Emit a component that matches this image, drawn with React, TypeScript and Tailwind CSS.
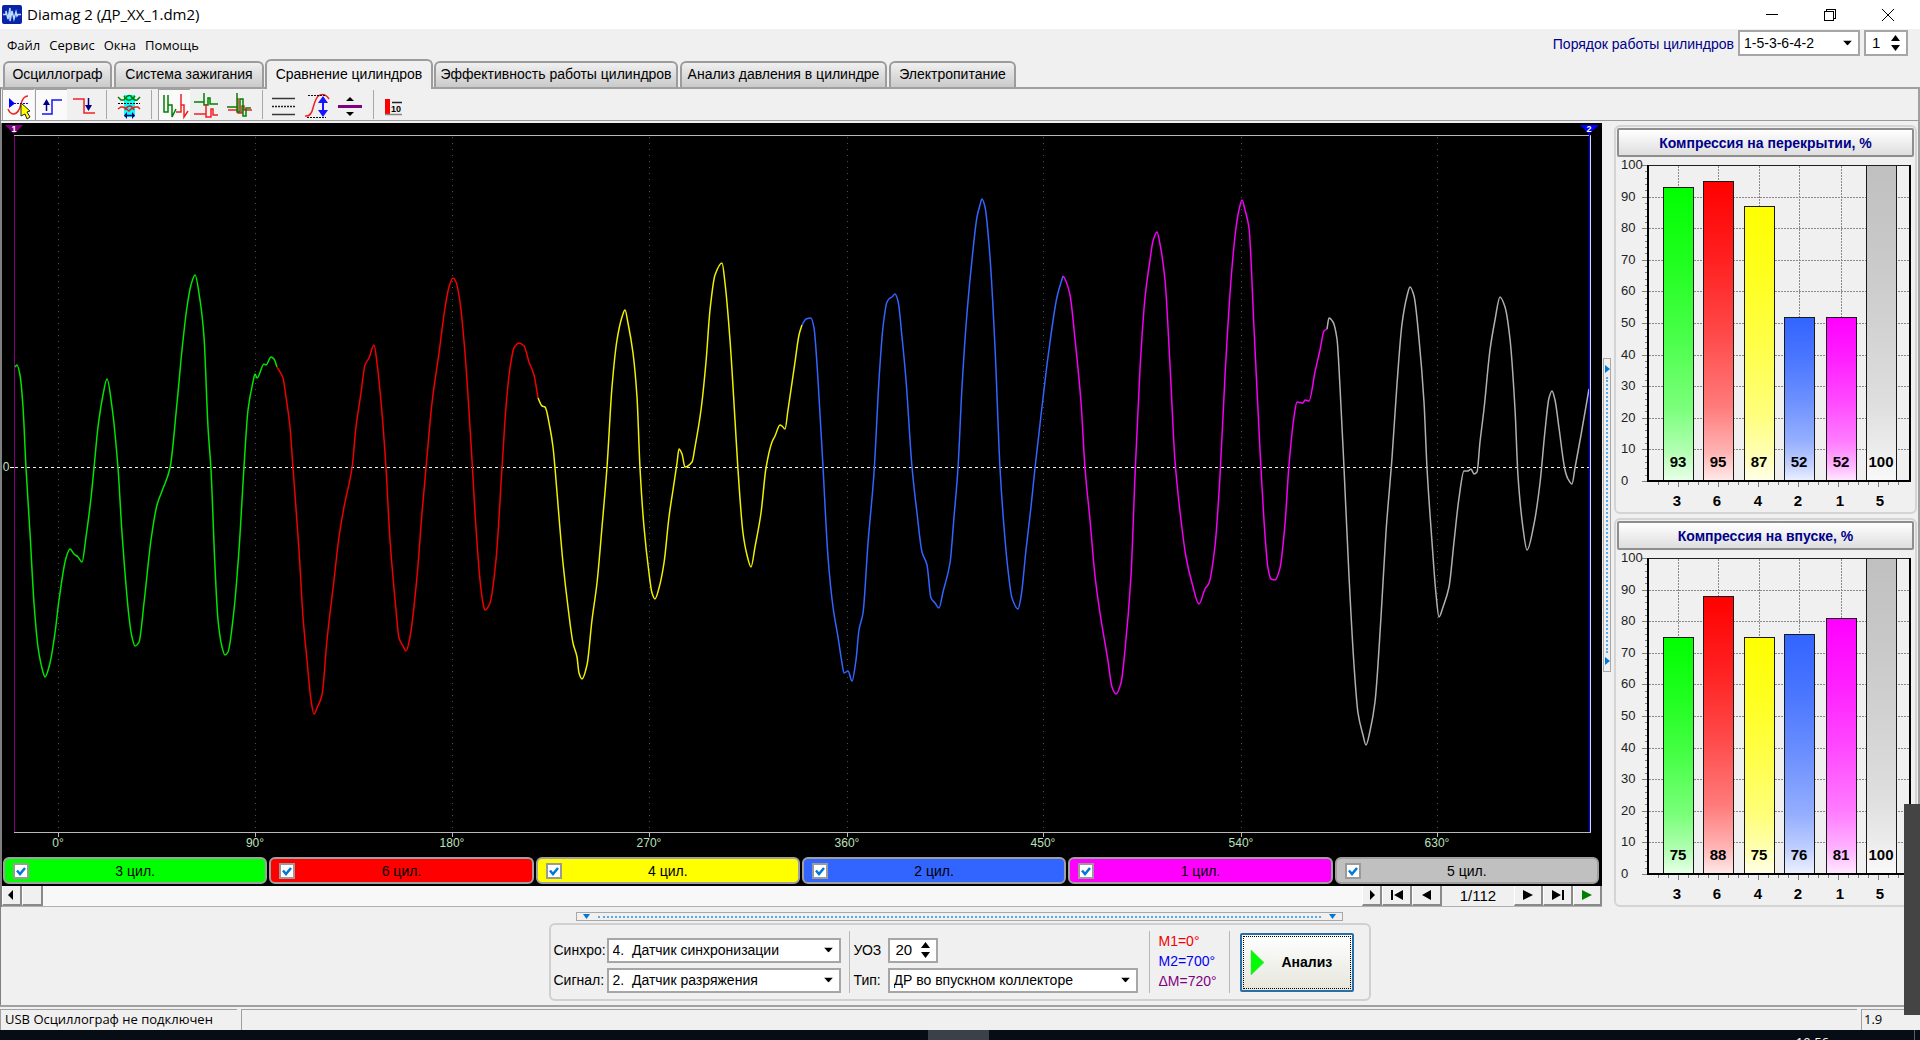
import type { ReactNode } from "react";

type Point = [number, number];

type Cylinder = {
  id: number;
  fill: string;
  button: string;
  line: string;
  overlap: number;
  intake: number;
  trace: Point[];
};

const CYLINDERS: Cylinder[] = [
  {
    id: 3, fill: "#00ff00", button: "bg-[#00ff00]", line: "#00e400", overlap: 93, intake: 75,
    trace: [[15,367],[17,365],[20,375],[23,407],[26,468],[30,533],[34,603],[38,647],[43,672],[45,677],[50,663],[55,633],[59,600],[66,558],[70,549],[74,554],[78,557],[82,562],[86,537],[91,498],[94,468],[98,427],[103,395],[107,379],[112,407],[118,468],[122,533],[129,617],[132,637],[135,646],[139,642],[144,603],[151,540],[157,505],[162,491],[170,468],[177,403],[182,350],[187,307],[191,285],[195,275],[200,300],[204,337],[208,427],[211,470],[215,567],[218,620],[222,647],[225,655],[228,652],[234,610],[239,550],[244,467],[248,410],[253,382],[255,374],[257,378],[264,364],[266,365],[271,357],[274,359],[277,367]],
  },
  {
    id: 6, fill: "#ff0000", button: "bg-[#ff0000]", line: "#f00000", overlap: 95, intake: 88,
    trace: [[277,367],[283,378],[286,397],[290,427],[293,468],[299,550],[303,617],[307,660],[311,700],[314,714],[317,708],[322,695],[327,640],[334,580],[339,537],[344,507],[352,468],[356,427],[361,393],[365,365],[369,358],[374,345],[377,363],[382,413],[386,468],[390,540],[396,610],[399,638],[403,646],[406,651],[410,637],[417,577],[422,513],[426,468],[432,403],[439,353],[445,308],[449,287],[453,278],[456,282],[460,302],[465,353],[472,460],[475,513],[480,580],[483,603],[485,610],[490,603],[496,560],[502,468],[506,407],[510,368],[514,348],[519,343],[524,346],[529,362],[534,375],[538,398]],
  },
  {
    id: 4, fill: "#ffff00", button: "bg-[#ffff00]", line: "#f0f000", overlap: 87, intake: 75,
    trace: [[538,398],[542,406],[545,407],[550,428],[553,447],[555,468],[559,517],[563,563],[568,607],[573,643],[577,657],[579,673],[582,679],[587,665],[592,620],[597,583],[602,527],[607,467],[612,387],[617,340],[622,317],[625,310],[628,323],[633,353],[637,397],[640,468],[644,527],[649,573],[652,593],[655,599],[659,588],[664,563],[669,517],[673,490],[677,463],[679,449],[682,454],[685,467],[692,462],[695,447],[701,410],[706,362],[710,310],[715,275],[722,263],[725,283],[730,340],[735,420],[738,470],[743,533],[747,555],[751,567],[755,547],[761,513],[766,468],[772,442],[775,436],[780,425],[782,426],[785,429],[788,410],[795,362],[799,335],[802,325]],
  },
  {
    id: 2, fill: "#3264ff", button: "bg-[#3264ff]", line: "#3264ff", overlap: 52, intake: 76,
    trace: [[802,325],[806,319],[811,318],[814,328],[818,380],[823,467],[828,557],[833,607],[838,637],[842,663],[844,673],[848,671],[852,681],[856,660],[859,630],[863,613],[868,543],[874,473],[879,380],[883,327],[887,302],[890,298],[892,297],[895,294],[898,301],[902,337],[906,380],[912,467],[917,513],[922,552],[927,565],[931,598],[935,603],[939,608],[943,592],[950,563],[954,517],[958,468],[962,387],[967,313],[973,250],[977,217],[980,205],[982,199],[985,207],[990,257],[995,347],[1000,468],[1004,527],[1008,570],[1012,598],[1018,609],[1021,597],[1026,550],[1031,507],[1035,468],[1042,407],[1048,357],[1057,297],[1063,276]],
  },
  {
    id: 1, fill: "#ff00ff", button: "bg-[#ff00ff]", line: "#f400f4", overlap: 52, intake: 81,
    trace: [[1063,276],[1065,279],[1070,295],[1075,339],[1081,402],[1085,468],[1090,520],[1095,576],[1100,613],[1108,661],[1112,687],[1116,694],[1121,683],[1125,650],[1131,576],[1135,476],[1140,369],[1145,298],[1150,260],[1153,241],[1157,232],[1160,244],[1165,280],[1170,365],[1175,461],[1181,520],[1186,557],[1192,583],[1199,604],[1205,589],[1209,583],[1215,546],[1220,476],[1225,376],[1231,280],[1236,228],[1239,210],[1242,200],[1245,210],[1249,228],[1254,328],[1260,450],[1265,535],[1268,568],[1271,579],[1275,580],[1280,568],[1285,524],[1289,465],[1294,417],[1297,402],[1303,403],[1305,400],[1309,401],[1315,372],[1320,350],[1324,331],[1327,329]],
  },
  {
    id: 5, fill: "#c0c0c0", button: "bg-[#c0c0c0]", line: "#b0b0b0", overlap: 100, intake: 100,
    trace: [[1327,329],[1329,318],[1333,322],[1337,339],[1340,387],[1344,468],[1349,576],[1354,665],[1358,713],[1363,735],[1366,745],[1370,731],[1375,702],[1381,617],[1386,532],[1392,458],[1397,384],[1402,324],[1407,296],[1410,287],[1414,296],[1419,339],[1424,402],[1427,468],[1432,542],[1436,594],[1439,617],[1443,607],[1449,587],[1454,542],[1459,498],[1464,471],[1468,471],[1471,469],[1474,474],[1477,472],[1480,442],[1484,409],[1490,350],[1495,320],[1500,297],[1505,307],[1510,339],[1515,409],[1518,476],[1523,528],[1527,550],[1534,524],[1540,483],[1545,431],[1549,398],[1552,391],[1555,400],[1559,428],[1565,470],[1568,479],[1572,484],[1575,468],[1581,435],[1589,389]],
  },
];

/** Monotone cubic path through the samples, so that peaks never overshoot. */
function tracePath(points: Point[]): string {
  const n = points.length;
  const slope = (i: number) => (points[i + 1][1] - points[i][1]) / (points[i + 1][0] - points[i][0]);
  const tangents = points.map((_, i) => {
    if (i === 0) return slope(0);
    if (i === n - 1) return slope(n - 2);
    const a = slope(i - 1);
    const b = slope(i);
    return a * b <= 0 ? 0 : (2 * a * b) / (a + b);
  });
  let d = `M${points[0][0]} ${points[0][1]}`;
  for (let i = 0; i < n - 1; i++) {
    const [x0, y0] = points[i];
    const [x1, y1] = points[i + 1];
    const h = (x1 - x0) / 3;
    d += `C${x0 + h} ${y0 + tangents[i] * h} ${x1 - h} ${y1 - tangents[i + 1] * h} ${x1} ${y1}`;
  }
  return d;
}

const GRID: { x: number; label: string }[] = [
  { x: 58, label: "0°" },
  { x: 255, label: "90°" },
  { x: 452, label: "180°" },
  { x: 649, label: "270°" },
  { x: 847, label: "360°" },
  { x: 1043, label: "450°" },
  { x: 1241, label: "540°" },
  { x: 1437, label: "630°" },
];

function Oscillogram() {
  return (
    <svg
      className="block min-h-0 w-full flex-1"
      viewBox="2 123 1600 734"
      preserveAspectRatio="none"
      role="img"
      aria-label="Осциллограмма цилиндров"
    >
      <g shapeRendering="crispEdges">
        <path d="M14 135.5H1591M14 832.5H1591" stroke="#b8b8b8" />
        {GRID.map((g) => (
          <g key={g.x}>
            <path d={`M${g.x + 0.5} 137V832`} stroke="#505050" strokeDasharray="1 5" />
            <path d={`M${g.x + 0.5} 833V837`} stroke="#b8b8b8" />
          </g>
        ))}
        <path d="M10 467.5H14" stroke="#fff" />
        <path d="M15 467.5H1589" stroke="#f0f0f0" strokeDasharray="3 3" />
        <path d="M14.5 136V832" stroke="#800080" />
      </g>
      <g fill="none" strokeWidth="1.5">
        {CYLINDERS.map((c) => (
          <path key={c.id} d={tracePath(c.trace)} stroke={c.line} />
        ))}
      </g>
      <path d="M1589.5 133V832" stroke="#0000ff" strokeWidth="1" shapeRendering="crispEdges" />
      <path d="M1590.5 136V832" stroke="#d8d8ff" strokeWidth="1" shapeRendering="crispEdges" />
      <path d="M5 125H23L14 134Z" fill="#800080" />
      <path d="M1580 125H1599L1589 134Z" fill="#0000ff" />
      <g className="font-['Liberation_Sans'] text-[9px] font-bold" fill="#fff" textAnchor="middle">
        <text x="14" y="132">1</text>
        <text x="1589" y="132">2</text>
      </g>
      <g className="font-['Liberation_Sans'] text-[12px]" fill="#bfe0bf" textAnchor="middle">
        <text x="6" y="471">0</text>
        {GRID.map((g) => (
          <text key={g.x} x={g.x} y="847">{g.label}</text>
        ))}
      </g>
    </svg>
  );
}

const BAR_CENTERS = [63, 103, 144, 184, 226, 266];
const AXIS_TOP = 8;
const AXIS_BOTTOM = 324;
const perUnit = (AXIS_BOTTOM - AXIS_TOP) / 100;
const valueY = (v: number) => Math.round(AXIS_BOTTOM - v * perUnit);

function CompressionChart({ title, name, field }: { title: string; name: string; field: "overlap" | "intake" }) {
  const tens = Array.from({ length: 11 }, (_, i) => i * 10);
  return (
    <section className="flex min-h-0 flex-1 flex-col rounded-md border-2 border-[#d4d4d4] p-px">
      <button
        type="button"
        className="h-[29px] shrink-0 rounded-xs border-2 border-[#8e8e8e] bg-linear-to-b from-white to-[#dedede] text-[14px] leading-5 font-bold text-[#000088]"
      >
        {title}
      </button>
      <svg className="block min-h-0 w-full flex-1" viewBox="2 0 297 354" preserveAspectRatio="none" role="img" aria-label={title}>
        <defs>
          {CYLINDERS.map((c) => (
            <linearGradient key={c.id} id={`${name}-${c.id}`} x1="0" y1="0" x2="0" y2="1">
              <stop offset="0" stopColor={c.fill} />
              <stop offset="0.25" stopColor={c.fill} stopOpacity="0.88" />
              <stop offset="0.5" stopColor={c.fill} stopOpacity="0.72" />
              <stop offset="0.75" stopColor={c.fill} stopOpacity="0.52" />
              <stop offset="0.9" stopColor={c.fill} stopOpacity="0.3" />
              <stop offset="1" stopColor={c.fill} stopOpacity="0.08" />
            </linearGradient>
          ))}
        </defs>
        <g shapeRendering="crispEdges">
          {tens.slice(1, 10).map((v) => (
            <path key={v} d={`M34 ${valueY(v) + 0.5}H294`} stroke="#8a8a8a" strokeDasharray="2 1" />
          ))}
          {BAR_CENTERS.map((x) => (
            <path key={x} d={`M${x + 0.5} 9V323`} stroke="#8a8a8a" strokeDasharray="2 1" />
          ))}
          {Array.from({ length: 51 }, (_, i) => (
            <path key={i} d={`M${i % 5 ? 30 : 27} ${valueY(i * 2) + 0.5}H33`} stroke="#808080" />
          ))}
          {Array.from({ length: 25 }, (_, i) => (
            <path key={i} d={`M${43 + i * 10 + 0.5} 325V${i % 4 === 2 ? 330 : 328}`} stroke="#808080" />
          ))}
          {CYLINDERS.map((c, i) => {
            const y = valueY(c[field]);
            return (
              <g key={c.id}>
                <rect x={BAR_CENTERS[i] - 15} y={y} width="31" height={AXIS_BOTTOM - y} fill="#fff" />
                <rect
                  x={BAR_CENTERS[i] - 15 + 0.5}
                  y={y + 0.5}
                  width="30"
                  height={AXIS_BOTTOM - y}
                  fill={`url(#${name}-${c.id})`}
                  stroke="#1a1a1a"
                />
              </g>
            );
          })}
          <path d="M32 8.5H295" stroke="#202020" />
          <path d="M33 8V325M295 8V325M32 324H296" stroke="#000" strokeWidth="2" />
        </g>
        <g className="font-['Liberation_Sans'] text-[13px]" fill="#222">
          {tens.map((v) => (
            <text key={v} x="6" y={valueY(v) + 4}>{v}</text>
          ))}
        </g>
        <g className="font-['Liberation_Sans'] text-[15px] font-bold" fill="#000" textAnchor="middle">
          {CYLINDERS.map((c, i) => (
            <g key={c.id}>
              <text x={BAR_CENTERS[i]} y="310">{c[field]}</text>
              <text x={BAR_CENTERS[i] - 1} y="349">{c.id}</text>
            </g>
          ))}
        </g>
      </svg>
    </section>
  );
}

function Select({ id, value, className }: { id: string; value: string; className: string }) {
  return (
    <span className={`relative block ${className}`}>
      <select
        id={id}
        defaultValue={value}
        className="h-full w-full appearance-none border-2 border-[#a6a6a6] bg-white pl-1 text-[14px] leading-5 whitespace-pre text-black"
      >
        <option value={value}>{value}</option>
      </select>
      <svg className="pointer-events-none absolute top-1/2 right-2 h-[5px] w-[9px] -translate-y-1/2" viewBox="0 0 9 5">
        <path d="M0 0H9L4.5 5Z" fill="#000" />
      </svg>
    </span>
  );
}

function Spinner({ id, value, className }: { id: string; value: string; className: string }) {
  return (
    <span className={`flex items-center border-2 border-[#a6a6a6] bg-white ${className}`}>
      <input id={id} defaultValue={value} className="min-w-0 flex-1 bg-white pl-1.5 text-[15px] leading-5 text-black outline-none" />
      <span className="flex flex-col gap-1 pr-[6px]">
        <button type="button" aria-label="Больше">
          <svg className="block h-[6px] w-[9px]" viewBox="0 0 9 6"><path d="M0 6H9L4.5 0Z" /></svg>
        </button>
        <button type="button" aria-label="Меньше">
          <svg className="block h-[6px] w-[9px]" viewBox="0 0 9 6"><path d="M0 0H9L4.5 6Z" /></svg>
        </button>
      </span>
    </span>
  );
}

function ToolButton({ label, pressed = false, children }: { label: string; pressed?: boolean; children: ReactNode }) {
  return (
    <button
      type="button"
      aria-label={label}
      aria-pressed={pressed}
      className={
        pressed
          ? "h-[31px] w-8 border-t border-l border-t-[#a0a0a0] border-l-[#a0a0a0] bg-[#fafafa]"
          : "h-[31px] w-8"
      }
    >
      <svg className="block h-[30px] w-8" viewBox="0 0 32 30" fill="none" strokeWidth="1.5">
        {children}
      </svg>
    </button>
  );
}

function Separator() {
  return <span className="mx-[5px] h-[29px] w-px bg-[#a8a8a8]" />;
}

function Toolbar() {
  return (
    <div className="flex h-[31px] shrink-0 items-center gap-px pl-px" role="toolbar">
      <ToolButton label="Синхронизация" pressed>
        <path d="M5 19Q7 24 11 24Q16 23 18 14Q20 6 25 6" stroke="#f02020" />
        <path d="M11 13.5H26" stroke="#00f" strokeWidth="1" strokeDasharray="2 1" />
        <path d="M6 8V18L12 13.5Z" fill="#00f" />
        <path d="M18 13L27 21L24 22L27 27L24 29L22 24L18 26Z" fill="#ff0" stroke="#222" strokeWidth="1" />
      </ToolButton>
      <ToolButton label="По переднему фронту" pressed>
        <path d="M6 24H16V10H26" stroke="#1515ff" />
        <path d="M10.5 21V12" stroke="#000080" />
        <path d="M7 15L10.5 9L14 15Z" fill="#000080" />
      </ToolButton>
      <ToolButton label="По заднему фронту">
        <path d="M5 9H16V23H27" stroke="#f02020" />
        <path d="M20.5 8V17" stroke="#000080" />
        <path d="M17 15L20.5 21L24 15Z" fill="#000080" />
      </ToolButton>
      <Separator />
      <ToolButton label="Ширина импульса">
        <path d="M11 5H22V27H11Z" fill="#00ffff" />
        <path d="M5 7L8 10H11Q15 4 18 6Q21 11 24 10L27 7" stroke="#008000" />
        <path d="M11 6Q14 11 17 10Q20 9 22 6" stroke="#008000" />
        <path d="M5 13.5H27" stroke="#000" strokeWidth="1" strokeDasharray="2 1" />
        <path d="M5 19L8 17H10Q13 18 16 21Q20 17 23 17H25L27 19" stroke="#e02020" />
        <path d="M12 20Q14 16 17 16Q19 16 21 20" stroke="#e02020" />
        <path d="M12 25.5H21" stroke="#000080" />
        <path d="M11 25.5L14 22V29ZM22 25.5L19 22V29Z" fill="#000080" />
      </ToolButton>
      <Separator />
      <ToolButton label="Последовательно" pressed>
        <path d="M5 5V22H9V5V15H13V27L17 19" stroke="#008000" />
        <path d="M17 22H22V4V15H25V27L29 21" stroke="#f02020" />
      </ToolButton>
      <ToolButton label="Раздельно">
        <path d="M3 12H13V3V15H17V8H19V14H27" stroke="#008000" />
        <path d="M3 24H15V14V27H20V19H22V25H27" stroke="#f02020" />
      </ToolButton>
      <ToolButton label="Наложение">
        <path d="M4 20H14V8V23H18V16H20V20H28" stroke="#f02020" />
        <path d="M3 17H13V3V22H16V9H19V26H22V18H27" stroke="#008000" />
      </ToolButton>
      <Separator />
      <ToolButton label="Линии">
        <path d="M3 8.5H26M3 24.5H26" stroke="#383838" />
        <path d="M3 16.5H26" stroke="#222" strokeDasharray="2 1" />
      </ToolButton>
      <ToolButton label="Автоматический масштаб">
        <path d="M3 26Q9 27 11 18Q14 6 18 5Q23 3 27 9" stroke="#f02020" />
        <path d="M6 5.5H24M5 27.5H24" stroke="#111" strokeWidth="1" strokeDasharray="2 1" />
        <path d="M21 10V22" stroke="#1515ff" strokeWidth="2" />
        <path d="M16 13L21 6L26 13ZM16 20L21 27L26 20Z" fill="#1515ff" />
      </ToolButton>
      <ToolButton label="Смещение нуля">
        <path d="M3 16.5H27" stroke="#800080" strokeWidth="3" />
        <path d="M11 11L15 7L19 11ZM11 22L15 26L19 22Z" fill="#000" />
      </ToolButton>
      <Separator />
      <ToolButton label="Показывать значения">
        <path d="M5 9H10V24H5Z" fill="#f00" />
        <path d="M12 12.5H22" stroke="#222" />
        <path d="M5 24.5H22" stroke="#888" />
        <text x="11" y="22" className="font-['Liberation_Sans'] text-[9px] font-bold" fill="#000">10</text>
      </ToolButton>
    </div>
  );
}

const TABS = [
  { label: "Осциллограф", width: "w-[109px]" },
  { label: "Система зажигания", width: "w-[150px]" },
  { label: "Сравнение цилиндров", width: "w-[168px]", active: true },
  { label: "Эффективность работы цилиндров", width: "w-[244px]" },
  { label: "Анализ давления в цилиндре", width: "w-[207px]" },
  { label: "Электропитание", width: "w-[127px]" },
];

function Tabs() {
  return (
    <div role="tablist" className="flex h-[28px] shrink-0 items-end gap-[2px] pl-[3px]">
      {TABS.map((t) => (
        <button
          key={t.label}
          type="button"
          role="tab"
          aria-selected={!!t.active}
          className={`${t.width} rounded-t-md border-2 border-b-0 border-[#9c9c9c] pb-[3px] text-[14px] leading-5 whitespace-nowrap text-black ${
            t.active ? "relative z-10 -mx-px -mb-[2px] h-[30px] bg-[#f0f0f0]" : "h-[26px] bg-linear-to-b from-[#f0f0f0] to-[#cacaca]"
          }`}
        >
          {t.label}
        </button>
      ))}
    </div>
  );
}

function NavButton({ label, width, children }: { label: string; width: string; children: ReactNode }) {
  return (
    <button
      type="button"
      aria-label={label}
      className={`${width} flex h-full items-center justify-center border-r-2 border-b-2 border-l border-[#8a8a8a] border-l-white bg-[#f0f0f0]`}
    >
      <svg className="h-[10px] w-[14px]" viewBox="0 0 14 10">{children}</svg>
    </button>
  );
}

export default function App() {
  return (
    <div className="flex h-screen flex-col overflow-hidden bg-[#f0f0f0] font-['Liberation_Sans',Arial,sans-serif] text-[14px] leading-5 text-black">
      <header className="flex h-[29px] shrink-0 items-center bg-white pl-[2px]">
        <svg className="h-[19px] w-5" viewBox="0 0 20 19">
          <rect width="20" height="19" rx="2" fill="#0822a8" />
          <path d="M1 9.5H4V6L6 14L8 3V16L10 6L12 14L14 7L15 11L16 9.5H19" fill="none" stroke="#b8dcff" strokeWidth="1.5" />
        </svg>
        <h1 className="ml-[5px] flex-1 pb-px font-['Open_Sans','Noto_Sans',sans-serif] text-[15px] leading-5">Diamag 2 (ДР_XX_1.dm2)</h1>
        <div className="flex">
          <button type="button" aria-label="Свернуть" className="flex h-[29px] w-[58px] items-center justify-center">
            <svg className="h-3 w-3" viewBox="0 0 12 12"><path d="M0 5.5H12" stroke="#000" shapeRendering="crispEdges" /></svg>
          </button>
          <button type="button" aria-label="Восстановить" className="flex h-[29px] w-[58px] items-center justify-center">
            <svg className="h-3 w-3" viewBox="0 0 12 12" fill="none" stroke="#000" shapeRendering="crispEdges">
              <path d="M0.5 2.5H9.5V11.5H0.5ZM2.5 2.5V0.5H11.5V9.5H9.5" />
            </svg>
          </button>
          <button type="button" aria-label="Закрыть" className="mr-[3px] flex h-[29px] w-[58px] items-center justify-center">
            <svg className="h-3 w-3" viewBox="0 0 12 12"><path d="M0 0L12 12M12 0L0 12" stroke="#000" /></svg>
          </button>
        </div>
      </header>

      <div className="flex h-[30px] shrink-0 items-start justify-between">
        <nav className="flex gap-[9px] pt-[6px] pl-[7px] font-['Open_Sans','Noto_Sans',sans-serif] text-[13px] leading-5">
          {["Файл", "Сервис", "Окна", "Помощь"].map((m) => (
            <button key={m} type="button">{m}</button>
          ))}
        </nav>
        <div className="flex items-center gap-1 pt-px pr-[12px]">
          <label htmlFor="order" className="pt-px text-[#000088]">Порядок работы цилиндров</label>
          <Select id="order" value="1-5-3-6-4-2" className="h-[26px] w-[122px]" />
          <Spinner id="first" value="1" className="h-[26px] w-11" />
        </div>
      </div>

      <Tabs />

      <main className="flex min-h-0 flex-1 flex-col border-t-2 border-r-2 border-l border-[#a0a0a0] border-l-[#808080]">
        <Toolbar />
        <div className="h-[3px] shrink-0 border-t border-[#9a9a9a]" />

        <div className="flex min-h-0 flex-1">
          <div className="flex min-w-0 flex-1 flex-col border-l border-[#808080]">
            <div className="flex min-h-0 flex-1 flex-col bg-black pb-[2px]">
              <Oscillogram />
              <div className="flex h-[27px] shrink-0 gap-[2px] pr-[3px] pl-px">
                {CYLINDERS.map((c) => (
                  <label
                    key={c.id}
                    className={`relative flex flex-1 items-center justify-center rounded-md border-2 border-[#a0a0a0] ${c.button}`}
                  >
                    <input type="checkbox" defaultChecked className="peer absolute top-1 left-2 h-4 w-4 appearance-none border-2 border-[#9a9a9a] bg-white" />
                    <svg className="pointer-events-none absolute top-1 left-2 hidden h-4 w-4 peer-checked:block" viewBox="0 0 16 16">
                      <path d="M4 7.5L7 11L12 5" fill="none" stroke="#0078d7" strokeWidth="2.5" />
                    </svg>
                    {c.id} цил.
                  </label>
                ))}
              </div>
            </div>
            <div className="flex h-[21px] shrink-0 border-b border-[#b0b0b0]">
              <NavButton label="Влево" width="w-5"><path d="M8 0V10L3 5Z" /></NavButton>
              <span className="w-[21px] border-r-2 border-b-2 border-l border-[#8a8a8a] border-l-white bg-[#f0f0f0]" />
              <span className="flex-1 bg-[#f8f8f8]" />
              <NavButton label="Вправо" width="w-5"><path d="M5 0V10L10 5Z" /></NavButton>
              <NavButton label="Первый" width="w-[30px]"><path d="M1 0H3V10H1ZM13 0V10L4 5Z" /></NavButton>
              <NavButton label="Предыдущий" width="w-[30px]"><path d="M11 0V10L2 5Z" /></NavButton>
              <output className="w-[72px] text-center text-[15px] leading-5">1/112</output>
              <NavButton label="Следующий" width="w-[29px]"><path d="M2 0V10L12 5Z" /></NavButton>
              <NavButton label="Последний" width="w-[30px]"><path d="M1 0V10L10 5ZM11 0H13V10H11Z" /></NavButton>
              <NavButton label="Воспроизвести" width="w-[29px]"><path d="M2 0V10L12 5Z" fill="#008000" /></NavButton>
            </div>
          </div>

          <div className="flex w-3 shrink-0 items-center pl-px">
            <div className="flex h-2/5 w-2 flex-col items-center justify-between border border-[#a8a8a8] py-[6px]">
              <svg className="h-2 w-[5px]" viewBox="0 0 5 8"><path d="M0 0V8L5 4Z" fill="#0078d7" /></svg>
              <span className="my-1 flex-1 border-l-2 border-dotted border-[#5aa9e6]" />
              <svg className="h-2 w-[5px]" viewBox="0 0 5 8"><path d="M0 0V8L5 4Z" fill="#0078d7" /></svg>
            </div>
          </div>

          <aside className="flex w-[304px] shrink-0 flex-col gap-1 pt-[2px] pr-px">
            <CompressionChart title="Компрессия на перекрытии, %" name="overlap" field="overlap" />
            <CompressionChart title="Компрессия на впуске, %" name="intake" field="intake" />
          </aside>
        </div>

        <div className="flex h-[98px] shrink-0 flex-col items-center pt-[5px]">
          <div className="flex h-[9px] w-2/5 items-center border border-[#a8a8a8] px-[6px]">
            <svg className="h-[5px] w-[7px]" viewBox="0 0 7 5"><path d="M0 0H7L3.5 5Z" fill="#0078d7" /></svg>
            <span className="mx-2 flex-1 border-t-2 border-dotted border-[#5aa9e6]" />
            <svg className="h-[5px] w-[7px]" viewBox="0 0 7 5"><path d="M0 0H7L3.5 5Z" fill="#0078d7" /></svg>
          </div>

          <form className="mt-[2px] flex h-[78px] items-center rounded-md border-2 border-[#d0d0d0] px-[3px]" onSubmit={(e) => e.preventDefault()}>
            <div className="grid grid-cols-[53px_234px] items-center gap-y-[5px] pt-[6px]">
              <label htmlFor="sync">Синхро:</label>
              <Select id="sync" value={"4.\u00a0 Датчик синхронизации"} className="h-[25px]" />
              <label htmlFor="signal">Сигнал:</label>
              <Select id="signal" value={"2.\u00a0 Датчик разряжения"} className="h-[25px]" />
            </div>
            <span className="mx-1 ml-2 h-[62px] w-px bg-[#b8b8b8]" />
            <div className="grid grid-cols-[34px_250px] items-center gap-y-[5px] pt-[6px]">
              <label htmlFor="advance">УОЗ</label>
              <Spinner id="advance" value="20" className="h-[25px] w-[50px]" />
              <label htmlFor="type">Тип:</label>
              <Select id="type" value="ДР во впускном коллекторе" className="h-[25px]" />
            </div>
            <span className="mr-[9px] ml-[11px] h-[62px] w-px bg-[#b8b8b8]" />
            <div className="w-[70px] pb-[2px]">
              <p className="text-[#f00000]">M1=0°</p>
              <p className="text-[#0000f0]">M2=700°</p>
              <p className="text-[#800080]">ΔM=720°</p>
            </div>
            <span className="mr-[10px] h-[62px] w-px bg-[#b8b8b8]" />
            <button
              type="submit"
              className="mr-[12px] flex h-[59px] w-[114px] items-center gap-[18px] rounded-xs border-2 border-[#2a6ea8] bg-linear-to-b from-white to-[#e6e6dc] pl-2 font-bold outline-1 -outline-offset-4 outline-dotted outline-black"
            >
              <svg className="h-[25px] w-[14px]" viewBox="0 0 14 25">
                <path d="M1 0V25L14 12.5Z" fill="#00ff00" stroke="#58c858" strokeWidth="0.5" />
              </svg>
              Анализ
            </button>
          </form>
        </div>
      </main>

      <footer className="flex h-[25px] shrink-0 gap-1 border-t-2 border-[#a0a0a0] bg-[#f0f0f0] pt-[2px] font-['Open_Sans','Noto_Sans',sans-serif] text-[13px] leading-[18px]">
        <span className="w-[237px] border-t border-l border-[#a0a0a0] pl-1">USB Осциллограф не подключен</span>
        <span className="flex-1 border-t border-l border-[#a0a0a0]" />
        <span className="w-[59px] border-t border-l border-[#a0a0a0] pl-[2px]">1.9</span>
      </footer>

      <div className="relative flex h-[10px] shrink-0 justify-end overflow-hidden bg-[#070d15]">
        <span className="absolute top-0 left-[928px] h-[10px] w-[61px] bg-[#3b4148]" />
        <time className="mt-[4px] mr-[85px] font-['Open_Sans','Noto_Sans',sans-serif] text-[13px] leading-4 text-white">10:56</time>
        <span className="mr-[5px] h-[10px] w-px bg-[#5a6068]" />
      </div>

      <div className="absolute top-[804px] right-0 h-[211px] w-4 bg-[#444444]" />
    </div>
  );
}
